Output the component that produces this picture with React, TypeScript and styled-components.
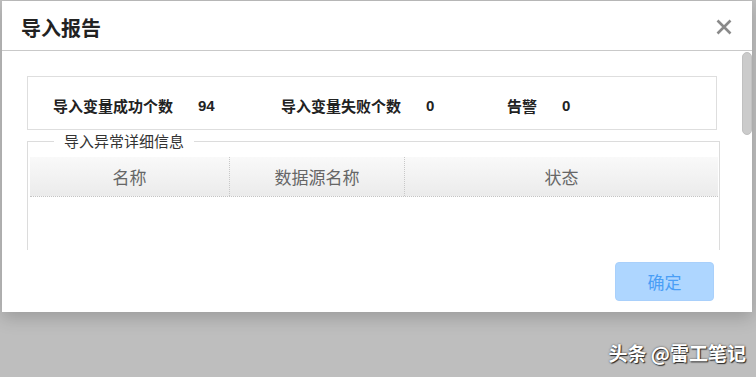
import styled, { createGlobalStyle } from 'styled-components';

const GlobalStyle = createGlobalStyle`
  html, body {
    margin: 0;
    padding: 0;
    background: #bebebe;
    font-family: "Noto Sans CJK SC", "Liberation Sans", sans-serif;
  }
  #root {
    padding: 1px 0 0 2px;
  }
`;

const Page = styled.div`
  position: relative;
  width: 754px;
  height: 376px;
`;

const Modal = styled.div`
  width: 750px;
  background: #fff;
  box-shadow: 0 6px 16px rgba(0, 0, 0, 0.18);
  display: flex;
  flex-direction: column;
`;

const TitleBar = styled.div`
  height: 49px;
  border-bottom: 1px solid #c9c9c9;
  display: flex;
  align-items: center;
  justify-content: space-between;
  padding: 0 20px 0 19px;
`;

const Title = styled.h3`
  margin: 0;
  font-size: 20px;
  font-weight: 700;
  color: #222;
  line-height: 1;
  padding-top: 4px;
`;

const Close = styled.button`
  border: 0;
  background: none;
  padding: 0;
  width: 16px;
  height: 16px;
  cursor: pointer;
  display: flex;
  margin-top: 2px;
`;

const Body = styled.div`
  height: 199px;
  overflow: hidden;
  display: flex;
`;

const Content = styled.div`
  flex: 1;
  padding: 25px 0 25px 25px;
`;

const ScrollTrack = styled.div`
  width: 10px;
  flex: none;
  background: #fff;
  padding-top: 1px;
`;

const ScrollThumb = styled.div`
  height: 83px;
  box-sizing: border-box;
  background: #cbcbcb;
  border: 1px solid #c0c0c0;
  border-radius: 5px;
`;

const Summary = styled.div`
  width: 690px;
  box-sizing: border-box;
  height: 54px;
  border: 1px solid #dedede;
  padding: 17px 0 0 25px;
  display: grid;
  grid-template-columns: 228px 226px 1fr;
  align-items: start;
`;

const Stat = styled.div`
  display: flex;
  align-items: center;
  font-size: 15px;
  font-weight: 700;
  color: #222;
  line-height: 24px;
`;

const Value = styled.span`
  margin-left: 25px;
  font-family: "Liberation Sans", "Noto Sans CJK SC", sans-serif;
`;

const Detail = styled.fieldset`
  margin: 1px 0 0;
  padding: 6px 1px 0 2px;
  width: 693px;
  box-sizing: border-box;
  height: 372px;
  border: 1px solid #dcdcdc;
  min-inline-size: 0;
`;

const Legend = styled.legend`
  margin-left: 24px;
  padding: 0 10px;
  font-size: 15px;
  color: #333;
  line-height: 20px;
`;

const HeaderRow = styled.div`
  display: grid;
  grid-template-columns: 199px 175px 1fr;
  height: 39px;
  background: linear-gradient(#f9f9f9, #ebebeb);
  border-bottom: 1px dotted #c4c4c4;
`;

const HeaderCell = styled.div<{ $first?: boolean }>`
  display: flex;
  align-items: center;
  justify-content: center;
  font-size: 17px;
  color: #666;
  border-left: ${(p) => (p.$first ? 'none' : '1px dotted #c8c8c8')};
`;

const Footer = styled.div`
  height: 62px;
  display: flex;
  justify-content: flex-end;
  align-items: flex-start;
  padding: 12px 38px 0 0;
  box-sizing: border-box;
`;

const Confirm = styled.button`
  width: 99px;
  height: 39px;
  border: 1px solid #a9d0fb;
  border-radius: 4px;
  background: #aed6ff;
  color: #4a9ef6;
  font-family: "Noto Sans CJK SC", sans-serif;
  font-size: 17px;
  cursor: pointer;
`;

const Watermark = styled.div`
  position: absolute;
  right: 10px;
  top: 338px;
  font-size: 19px;
  font-weight: 700;
  color: #fff;
  text-shadow: 1px 1px 1px #2a2a2a, 0 0 2px #444;
`;

const stats = [
  { label: '导入变量成功个数', value: 94 },
  { label: '导入变量失败个数', value: 0 },
  { label: '告警', value: 0 },
];

export default function App() {
  return (
    <Page>
      <GlobalStyle />
      <Modal>
        <TitleBar>
          <Title>导入报告</Title>
          <Close aria-label="close">
            <svg width="16" height="16" viewBox="0 0 16 16">
              <path d="M1.5 1.5 L14.5 14.5 M14.5 1.5 L1.5 14.5" stroke="#8a8a8a" strokeWidth="2.6" />
            </svg>
          </Close>
        </TitleBar>
        <Body>
          <Content>
            <Summary>
              {stats.map((s) => (
                <Stat key={s.label}>
                  {s.label}
                  <Value>{s.value}</Value>
                </Stat>
              ))}
            </Summary>
            <Detail>
              <Legend>导入异常详细信息</Legend>
              <HeaderRow>
                <HeaderCell $first>名称</HeaderCell>
                <HeaderCell>数据源名称</HeaderCell>
                <HeaderCell>状态</HeaderCell>
              </HeaderRow>
            </Detail>
          </Content>
          <ScrollTrack>
            <ScrollThumb />
          </ScrollTrack>
        </Body>
        <Footer>
          <Confirm>确定</Confirm>
        </Footer>
      </Modal>
      <Watermark>头条 @雷工笔记</Watermark>
    </Page>
  );
}
